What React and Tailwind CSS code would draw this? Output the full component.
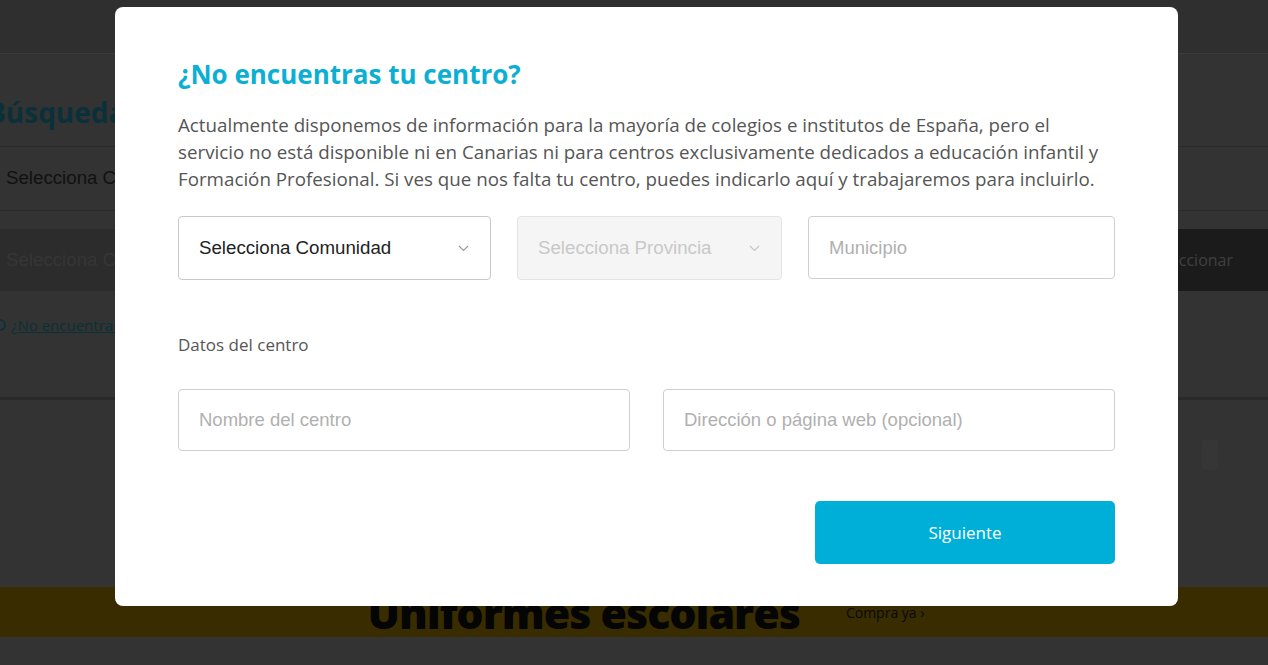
import React from 'react';

const ChevronDown = ({ className }) => (
  <svg width="11" height="7" viewBox="0 0 11 7" fill="none" className={className}>
    <polyline points="1,1 5.5,5.5 10,1" stroke="currentColor" strokeWidth="1.1" />
  </svg>
);

const SelectBox = ({ label, disabled }) => (
  <div
    className={`flex h-[64px] items-center justify-between rounded-[4px] border pl-[20px] pr-[21px] ${
      disabled ? 'border-[#e4e4e4] bg-[#f5f5f5] text-[#c8c8c8]' : 'border-[#c9c9c9] bg-white text-[#222]'
    }`}
  >
    <span className="font-['Liberation_Sans',Arial,sans-serif] text-[18.7px]">{label}</span>
    <ChevronDown className={disabled ? 'text-[#c4c4c4]' : 'text-[#9a9a9a]'} />
  </div>
);

const TextField = ({ placeholder, className = '' }) => (
  <input
    readOnly
    placeholder={placeholder}
    className={`w-full rounded-[4px] border border-[#cfcfcf] bg-white px-[20px] font-['Liberation_Sans',Arial,sans-serif] text-[18.5px] text-[#222] outline-none placeholder:text-[#b0b0b0] ${className}`}
  />
);

const App = () => {
  return (
    <div className="relative h-[665px] w-[1268px] overflow-hidden bg-[#333333] font-['Open_Sans',sans-serif]">
      {/* Dimmed page behind the modal */}
      <div className="flex h-full flex-col">
        <div className="h-[54px] border-b border-[#3b3b3b] bg-[#2f2f2f]" />

        <div className="flex h-[343px] flex-col">
          <div className="flex h-[92px] items-center pt-[24px]">
            <h2 className="-ml-[13px] text-[28px] font-bold text-[#0a3139]">Búsqueda</h2>
          </div>
          <div className="flex h-[65px] items-center border-y border-[#2a2a2a] pl-[6px]">
            <span className="w-[109px] overflow-hidden whitespace-nowrap font-['Liberation_Sans',Arial,sans-serif] text-[18.7px] text-[#111]">Selecciona Comunidad</span>
          </div>
          <div className="mt-[18px] flex h-[62px] bg-[#2c2c2c]">
            <div className="flex flex-1 items-center pl-[6px]">
              <span className="w-[109px] overflow-hidden whitespace-nowrap font-['Liberation_Sans',Arial,sans-serif] text-[18.7px] text-[#363636]">Selecciona Comunidad</span>
            </div>
            <div className="flex w-[160px] items-center bg-[#1b1b1b] pl-[40px]">
              <span className="text-[16px] text-[#404040]">Seleccionar</span>
            </div>
          </div>
          <div className="flex h-[68px] items-center gap-[5px]">
            <span className="-ml-[6px] h-[12px] w-[12px] rounded-full border-2 border-[#0a3139]" />
            <span className="text-[15px] text-[#0a3139] underline">¿No encuentras tu centro?</span>
          </div>
        </div>

        <div className="h-[3px] bg-[#292929]" />
        <div className="flex h-[187px] items-start justify-end pr-[50px] pt-[40px]">
          <div className="h-[30px] w-[16px] rounded-[3px] bg-[#363636]" />
        </div>

        <div className="flex h-[50px] items-center justify-center gap-[46px] bg-[#382c00] pl-[24px]">
          <span className="text-[43px] font-extrabold leading-none tracking-tight text-[#050505]">Uniformes escolares</span>
          <span className="text-[14px] text-[#0a0a0a]">Compra ya ›</span>
        </div>
        <div className="flex-1 bg-[#333333]" />
      </div>

      {/* Modal */}
      <div className="absolute left-[115px] top-[7px] flex h-[599px] w-[1063px] flex-col rounded-[8px] bg-white px-[63px] pt-[49px]">
        <h1 className="text-[26px] font-bold leading-[36px] text-[#0cafd4]">¿No encuentras tu centro?</h1>
        <p className="mt-[19px] text-[18.75px] leading-[27px] text-[#555]">
          Actualmente disponemos de información para la mayoría de colegios e institutos de España, pero el
          <br />
          servicio no está disponible ni en Canarias ni para centros exclusivamente dedicados a educación infantil y
          <br />
          Formación Profesional. Si ves que nos falta tu centro, puedes indicarlo aquí y trabajaremos para incluirlo.
        </p>

        <div className="mt-[24px] grid grid-cols-[313px_265px_307px] gap-[26px]">
          <SelectBox label="Selecciona Comunidad" />
          <SelectBox label="Selecciona Provincia" disabled />
          <TextField placeholder="Municipio" className="h-[63px]" />
        </div>

        <div className="mt-[53px] text-[17px] leading-[24px] text-[#555]">Datos del centro</div>

        <div className="mt-[32px] grid grid-cols-2 gap-[33px]">
          <TextField placeholder="Nombre del centro" className="h-[62px]" />
          <TextField placeholder="Dirección o página web (opcional)" className="h-[62px]" />
        </div>

        <div className="mt-[50px] flex justify-end">
          <button className="h-[63px] w-[300px] rounded-[5px] bg-[#00afd8] text-[17px] text-white">Siguiente</button>
        </div>
      </div>
    </div>
  );
};

export default App;
